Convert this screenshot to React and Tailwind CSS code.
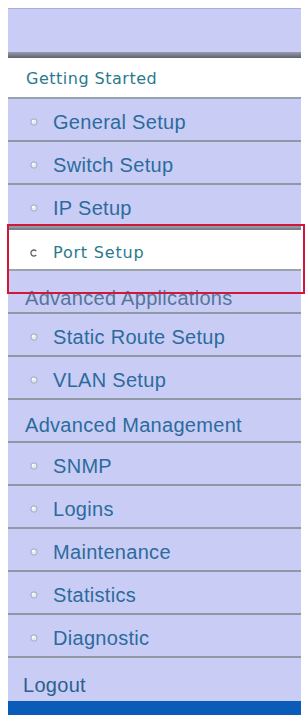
const setup = [
  { label: 'General Setup' },
  { label: 'Switch Setup' },
  { label: 'IP Setup' },
]

const apps = [{ label: 'Static Route Setup' }, { label: 'VLAN Setup' }]

const mgmt = [
  { label: 'SNMP' },
  { label: 'Logins' },
  { label: 'Maintenance' },
  { label: 'Statistics' },
  { label: 'Diagnostic' },
]

function Bullet({ active }) {
  if (active) {
    return (
      <svg width="8" height="8" viewBox="0 0 8 8" className="shrink-0">
        <path d="M6.3 2.2A3 3 0 1 0 6.3 5.8" fill="none" stroke="#5d616c" strokeWidth="1.3" />
      </svg>
    )
  }
  return (
    <svg width="8" height="8" viewBox="0 0 8 8" className="shrink-0">
      <circle cx="4" cy="4" r="3.2" fill="#e4e6f2" stroke="#a3a7b6" strokeWidth="1" />
      <circle cx="3.2" cy="3.2" r="1.1" fill="#ffffff" />
    </svg>
  )
}

function SubItem({ label }) {
  return (
    <div className="h-[43px] border-b-2 border-[#8f99a6] bg-[#c9cdf6] flex items-center pl-[22px] pt-[4px]">
      <Bullet />
      <span className="ml-[15px] text-[20px] tracking-[0.3px] text-[#2c6b9c] font-['Liberation_Sans',Arial,sans-serif] leading-none">
        {label}
      </span>
    </div>
  )
}

function Section({ label, muted }) {
  return (
    <div className={`h-[43px] border-b-2 border-[#8f99a6] bg-[#c9cdf6] flex items-center pl-[17px] ${muted ? 'pt-[12px]' : 'pt-[8px]'}`}>
      <span
        className={`text-[20px] tracking-[0.3px] font-['Liberation_Sans',Arial,sans-serif] leading-none ${muted ? 'text-[#55769a]' : 'text-[#2c6b9c]'}`}
      >
        {label}
      </span>
    </div>
  )
}

export default function App() {
  return (
    <div className="min-h-[715px] bg-white pt-[8px] pl-[8px]">
      <div className="relative w-[293px]">
        {/* top header */}
        <div className="h-[50px] flex flex-col">
          <div className="h-[44px] bg-[#c9cdf6] border-t border-[#a9aee0]" />
          <div className="h-[6px] bg-gradient-to-b from-[#9a9cab] to-[#5f6170]" />
        </div>

        <div className="h-[41px] border-b-2 border-[#9aa3ad] bg-white flex items-center pl-[18px] pt-[2px]">
          <span className="text-[16px] tracking-[0.5px] text-[#2b7a8c] font-['DejaVu_Sans',Verdana,sans-serif] leading-none">
            Getting Started
          </span>
        </div>

        {setup.map((s) => (
          <SubItem key={s.label} label={s.label} />
        ))}

        <div className="h-[43px] border-t-2 border-[#7c8089] border-b-2 border-b-[#9aa3ad] bg-white flex items-center pl-[22px] pt-[6px]">
          <Bullet active />
          <span className="ml-[15px] text-[16px] tracking-[0.8px] text-[#2b7a8c] font-['DejaVu_Sans',Verdana,sans-serif] leading-none">
            Port Setup
          </span>
        </div>

        <Section label="Advanced Applications" muted />
        {apps.map((s) => (
          <SubItem key={s.label} label={s.label} />
        ))}

        <Section label="Advanced Management" />
        {mgmt.map((s) => (
          <SubItem key={s.label} label={s.label} />
        ))}

        <div className="h-[43px] bg-[#c9cdf6] flex items-center pl-[15px] pt-[10px]">
          <span className="text-[20px] tracking-[0.3px] text-[#2d5f8e] font-['Liberation_Sans',Arial,sans-serif] leading-none">
            Logout
          </span>
        </div>
        <div className="h-[14px] bg-[#0a5cb8]" />

        {/* red highlight annotation */}
        <div className="absolute left-[-1px] top-[216px] w-[298px] h-[70px] border-2 border-[#d0193a] pointer-events-none" />
      </div>
    </div>
  )
}
